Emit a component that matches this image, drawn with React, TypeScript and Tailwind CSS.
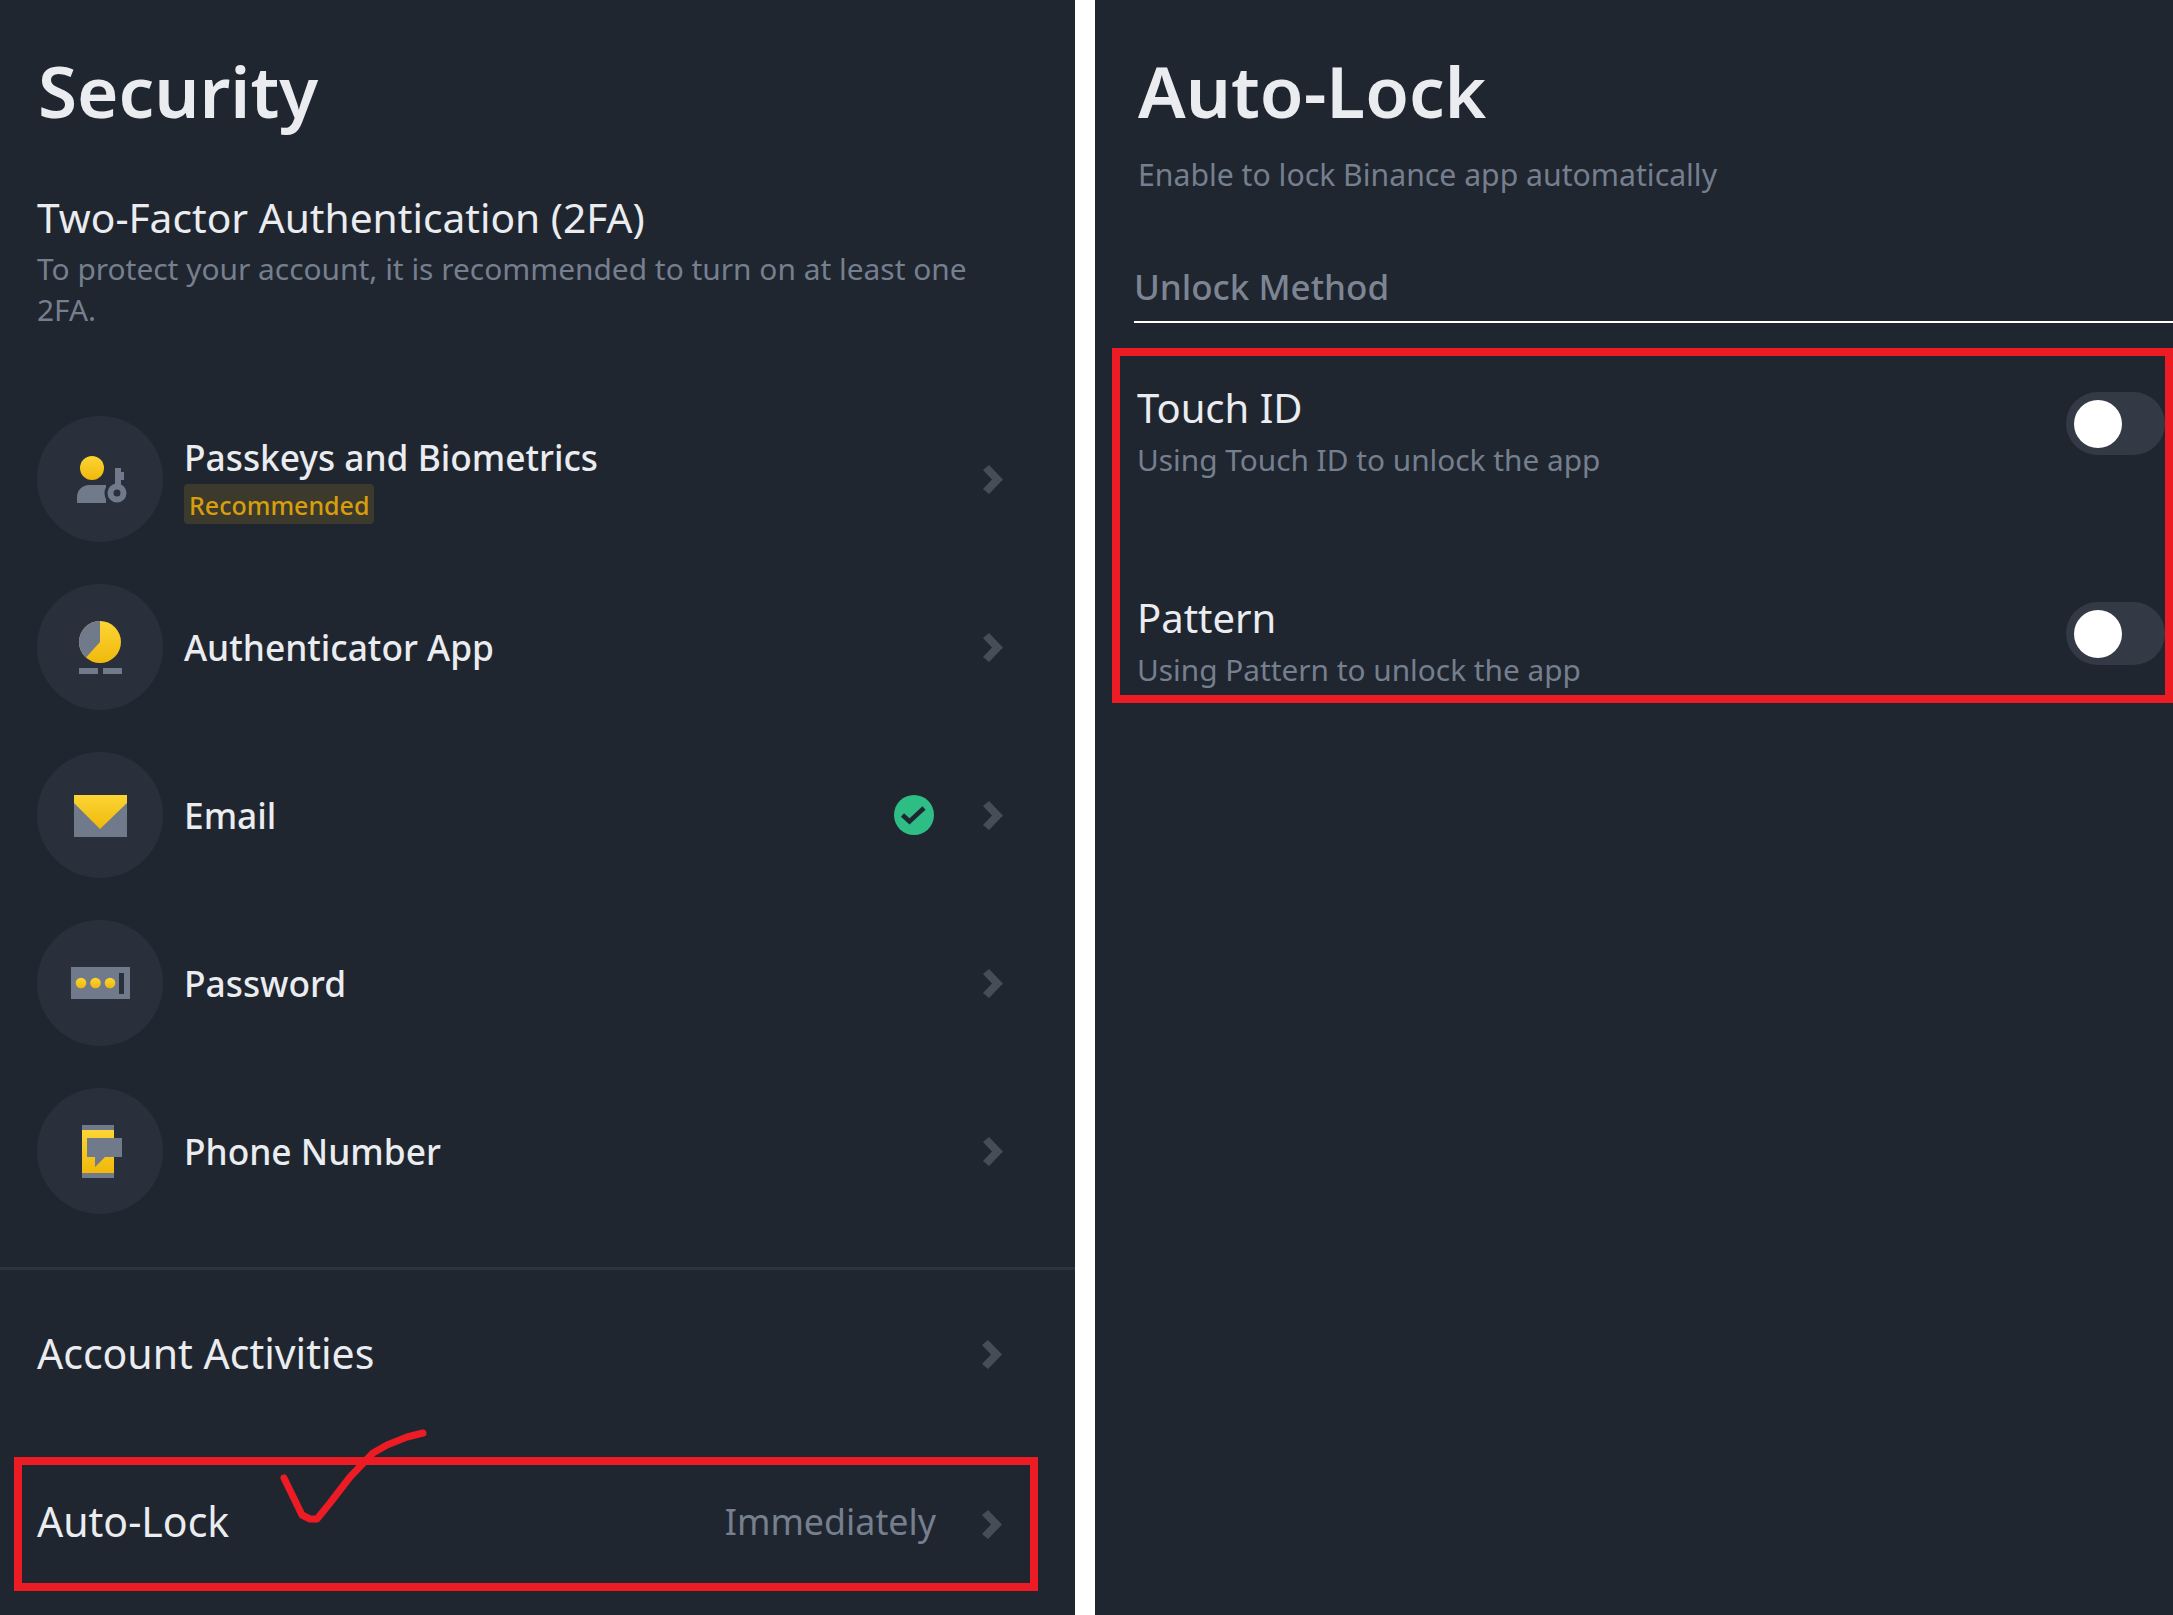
import type { ReactNode } from "react";

const YELLOW = "url(#yellow)";
const GRAY = "#707a8a";

function Chevron() {
  return (
    <svg width="20" height="29" viewBox="0 0 20 29" className="shrink-0">
      <polygon points="0,5 6,0 20,14.5 6,29 0,24 9,14.5" fill="#474d57" />
    </svg>
  );
}

function IconCircle({ children }: { children: ReactNode }) {
  return (
    <div className="h-[126px] w-[126px] shrink-0 rounded-full bg-[#29303b]">
      <svg width="126" height="126" viewBox="0 0 126 126">
        {children}
      </svg>
    </div>
  );
}

function Gradients() {
  return (
    <svg width="0" height="0" className="absolute">
      <defs>
        <linearGradient id="yellow" x1="0" y1="0" x2="0" y2="1">
          <stop offset="0" stopColor="#fcd535" />
          <stop offset="1" stopColor="#f0b90b" />
        </linearGradient>
      </defs>
    </svg>
  );
}

function PasskeyIcon() {
  return (
    <IconCircle>
      <path d="M40 87v-6a12 12 0 0 1 12-12h17v18z" fill={GRAY} />
      <circle cx="80" cy="77" r="12.5" fill="#29303b" />
      <circle cx="55" cy="52" r="12" fill={YELLOW} />
      <path d="M78 52h6v4h3v8h-3v6h-6z" fill={GRAY} />
      <circle cx="80" cy="77" r="6.5" fill="none" stroke={GRAY} strokeWidth="6" />
    </IconCircle>
  );
}

function AuthenticatorIcon() {
  return (
    <IconCircle>
      <circle cx="63" cy="58" r="21" fill={YELLOW} />
      <path d="M63 58V37a21 21 0 0 0-14 36.600z" fill={GRAY} />
      <rect x="42" y="84" width="19" height="6" fill={GRAY} />
      <rect x="66" y="84" width="19" height="6" fill={GRAY} />
    </IconCircle>
  );
}

function EmailIcon() {
  return (
    <IconCircle>
      <rect x="37" y="43" width="53" height="42" fill={GRAY} />
      <polygon points="37,43 90,43 90,51 63,77 37,51" fill={YELLOW} />
    </IconCircle>
  );
}

function PasswordIcon() {
  return (
    <IconCircle>
      <rect x="34" y="47" width="59" height="32" fill={GRAY} />
      <circle cx="44" cy="63" r="5.300" fill={YELLOW} />
      <circle cx="58.500" cy="63" r="5.300" fill={YELLOW} />
      <circle cx="73" cy="63" r="5.300" fill={YELLOW} />
      <rect x="82" y="53" width="5" height="21" fill="#29303b" />
    </IconCircle>
  );
}

function PhoneIcon() {
  return (
    <IconCircle>
      <rect x="45" y="37" width="32" height="53" fill={GRAY} />
      <rect x="45" y="42" width="32" height="43" fill={YELLOW} />
      <polygon points="50,50 85,50 85,69 68,69 58,79 58,69 50,69" fill={GRAY} />
    </IconCircle>
  );
}

function SecurityRow({ icon, title, children, verified }: { icon: ReactNode; title: string; children?: ReactNode; verified?: boolean }) {
  return (
    <div className="flex h-[126px] w-[966px] items-center">
      {icon}
      <div className="ml-[21px] flex-1">
        <div className="text-[35.300px] leading-[46px] font-medium text-[#eaecef]">{title}</div>
        {children}
      </div>
      {verified && (
        <svg width="40" height="40" viewBox="0 0 40 40" className="mr-[49px]">
          <circle cx="20" cy="20" r="20" fill="#2ebd85" />
          <path d="M8.500 20l7 6.500L30 13" fill="none" stroke="#1f2630" strokeWidth="4.500" />
        </svg>
      )}
      <Chevron />
    </div>
  );
}

function UnlockRow({ title, hint, className }: { title: string; hint: string; className?: string }) {
  return (
    <div className={`flex items-start justify-between ${className ?? ""}`}>
      <div className="pl-[17px]">
        <div className="text-[40px] leading-[50px] text-[#eaecef]">{title}</div>
        <div className="mt-[7px] text-[29.800px] leading-[40px] text-[#767f8e]">{hint}</div>
      </div>
      <div className="mt-[9px] flex h-[63px] w-[99px] items-center rounded-full bg-[#333a45] pl-[8px]">
        <div className="h-[48px] w-[48px] rounded-full bg-white" />
      </div>
    </div>
  );
}

export default function App() {
  return (
    <div className="flex h-[1615px] overflow-hidden bg-white font-['Noto_Sans',sans-serif]">
      <Gradients />
      <section className="relative h-full w-[1075px] shrink-0 bg-[#1f2630]">
        <h1 className="pt-[52px] pl-[38px] text-[71px] leading-[78px] font-semibold text-[#eaecef]">Security</h1>
        <h2 className="mt-[62px] pl-[37px] text-[40.700px] leading-[50px] text-[#eaecef]">Two-Factor Authentication (2FA)</h2>
        <p className="mt-[6px] w-[1010px] pl-[37px] text-[29.900px] leading-[41px] text-[#767f8e]">
          To protect your account, it is recommended to turn on at least one 2FA.
        </p>

        <div className="mt-[86px] flex flex-col gap-[42px] pl-[37px]">
          <SecurityRow icon={<PasskeyIcon />} title="Passkeys and Biometrics">
            <span className="mt-[4px] inline-block rounded-[4px] bg-[#3c3a2c] px-[5px] pt-[2px] text-[25px] leading-[38px] font-medium text-[#d89e0c]">
              Recommended
            </span>
          </SecurityRow>
          <SecurityRow icon={<AuthenticatorIcon />} title="Authenticator App" />
          <SecurityRow icon={<EmailIcon />} title="Email" verified />
          <SecurityRow icon={<PasswordIcon />} title="Password" />
          <SecurityRow icon={<PhoneIcon />} title="Phone Number" />
        </div>

        <div className="mt-[53px] h-[3px] bg-[#2b3340]" />

        <div className="mt-[54px] flex h-[60px] w-[1002px] items-center justify-between pl-[37px]">
          <span className="text-[41px] text-[#eaecef]">Account Activities</span>
          <Chevron />
        </div>

        <div className="mt-[73px] ml-[14px] flex h-[134px] w-[1024px] items-center border-[8px] border-[#ed1c24] pr-[28px] pl-[15px]">
          <span className="flex-1 pb-[4px] text-[41px] text-[#eaecef]">Auto-Lock</span>
          <span className="mr-[46px] pb-[5px] text-[35.800px] text-[#767f8e]">Immediately</span>
          <Chevron />
        </div>

        {/* hand-drawn tick over the box */}
        <svg className="absolute top-[1425px] left-[275px]" width="160" height="105" viewBox="275 1425 160 105">
          <path
            d="M284 1478L302 1515L310 1519H317L330 1503L350 1477L373 1453L387 1445L407 1437L423 1433"
            fill="none"
            stroke="#ed1c24"
            strokeWidth="7"
            strokeLinecap="round"
            strokeLinejoin="round"
          />
        </svg>
      </section>

      <section className="ml-[20px] h-full flex-1 bg-[#1f2630]">
        <h1 className="pt-[52px] pl-[43px] text-[71px] leading-[78px] font-semibold text-[#eaecef]">Auto-Lock</h1>
        <p className="mt-[25px] pl-[43px] text-[30.200px] leading-[40px] text-[#767f8e]">Enable to lock Binance app automatically</p>
        <div className="mt-[75px] ml-[39px] flex h-[53px] items-center border-b-2 border-white pb-[16px] text-[35px] font-medium text-[#7d8593]">
          Unlock Method
        </div>
        <div className="mt-[25px] ml-[17px] border-[8px] border-[#ed1c24] pt-[27px] pb-[5px]">
          <UnlockRow title="Touch ID" hint="Using Touch ID to unlock the app" />
          <UnlockRow title="Pattern" hint="Using Pattern to unlock the app" className="mt-[113px]" />
        </div>
      </section>
    </div>
  );
}
